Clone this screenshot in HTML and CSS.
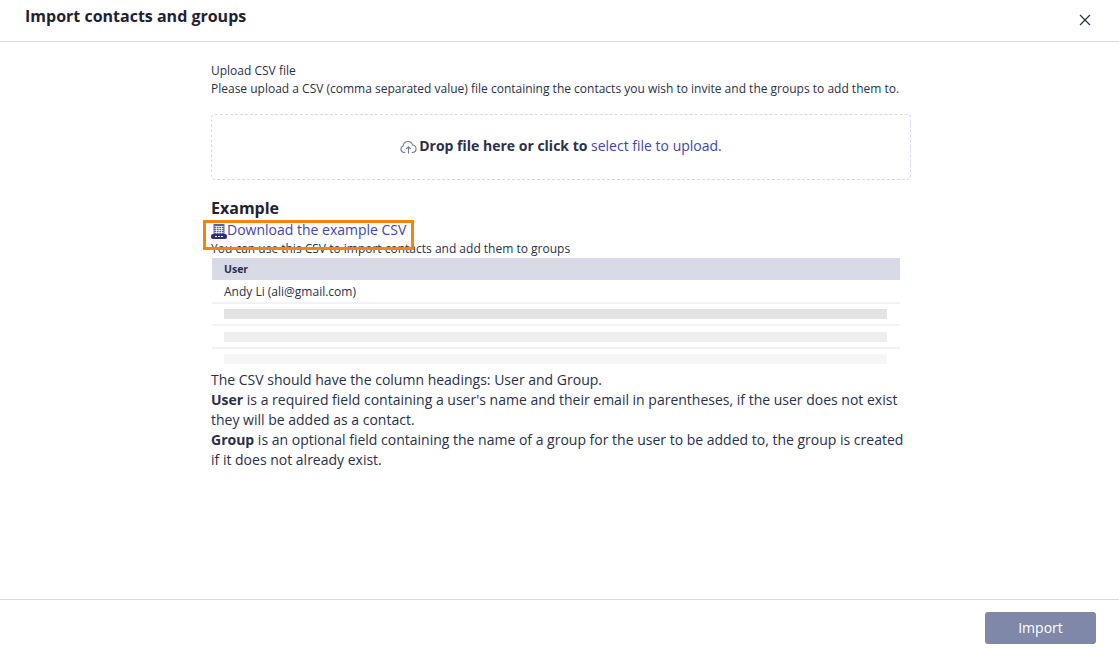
FILE: index.html
```html
<!DOCTYPE html>
<html lang="en">
<head>
<meta charset="utf-8">
<title>Import contacts and groups</title>
<link rel="stylesheet" href="styles.css">
</head>
<body>
<div class="dialog">
  <header class="head">
    <h1 class="title">Import contacts and groups</h1>
    <svg class="close" width="12" height="12" viewBox="0 0 12 12" aria-label="Close"><path d="M1 1L11 11M11 1L1 11" stroke="#2b2f3f" stroke-width="1.2" fill="none"/></svg>
  </header>
  <main class="body">
    <div class="col">
      <p class="intro">Upload CSV file<br>Please upload a CSV (comma separated value) file containing the contacts you wish to invite and the groups to add them to.</p>
      <div class="drop">
        <svg class="cloud" width="17" height="14" viewBox="0 0 17 14"><path d="M5.2 12.5H4.2A3.4 3.4 0 0 1 3.2 5.9 4.8 4.8 0 0 1 12.6 5 3.8 3.8 0 0 1 13 12.5H11.8" fill="none" stroke="#6f7899" stroke-width="1.1"/><path d="M8.5 13.5V6.8M6 9.2L8.5 6.8 11 9.2" fill="none" stroke="#6f7899" stroke-width="1.1"/></svg>
        <span class="drop-text"><b>Drop file here or click to</b> <a class="link">select file to upload.</a></span>
      </div>
      <h2 class="ex-title">Example</h2>
      <div class="dl">
        <svg class="csv" width="16" height="15" viewBox="0 0 16 15"><path d="M2.5 0H13.5V10H2.5Z" fill="#5b5fa6"/><path d="M3.5 2.5H12.5M3.5 4.5H12.5M3.5 6.5H12.5M3.5 8.5H12.5M5.5 2V9.5M8 2V9.5M10.5 2V9.5" stroke="#fff" stroke-width=".7"/><rect x="0" y="10" width="16" height="5" rx="2" fill="#2d2d7d"/><path d="M4 12.5H12" stroke="#fff" stroke-width="1" stroke-dasharray="2 1"/></svg>
        <a class="link">Download the example CSV</a>
        <span class="mark"></span>
      </div>
      <p class="note">You can use this CSV to import contacts and add them to groups</p>
      <div class="table">
        <div class="th">User</div>
        <div class="row r1">Andy Li (ali@gmail.com)</div>
        <div class="row r2"><span class="ph ph1"></span></div>
        <div class="row r3"><span class="ph ph2"></span></div>
        <div class="row r4"><span class="ph ph3"></span></div>
      </div>
      <p class="desc">The CSV should have the column headings: User and Group.<br>
      <b>User</b> is a required field containing a user's name and their email in parentheses, if the user does not exist they will be added as a contact.<br>
      <b>Group</b> is an optional field containing the name of a group for the user to be added to, the group is created if it does not already exist.</p>
    </div>
  </main>
  <footer class="foot"><button class="btn">Import</button></footer>
</div>
</body>
</html>
```
FILE: styles.css
```css
* { box-sizing: border-box; }
html, body { margin: 0; height: 100%; }
body { font-family: "Open Sans", sans-serif; color: #2a3048; background: #fff; overflow: hidden; }
.dialog { display: flex; flex-direction: column; height: 648px; }
.head { height: 42px; flex: none; display: flex; justify-content: space-between; align-items: flex-start; padding: 0 28px 0 25px; border-bottom: 1px solid #d9d9e2; }
.title { margin: 5px 0 0; font-size: 16px; line-height: 22px; font-weight: 700; color: #1f2233; }
.close { margin-top: 14px; }
.body { flex: 1; padding: 20px 0 0 211px; }
.col { width: 700px; }
.intro { margin: 0; font-size: 12px; line-height: 18px; }
.drop { margin-top: 16px; height: 66px; padding-bottom: 3px; border: 1px dashed #d6d8e6; border-radius: 4px; display: flex; align-items: center; justify-content: center; gap: 2px; font-size: 14px; }
.cloud { flex: none; margin-top: 3px; }
.link { color: #4146ae; }
.ex-title { margin: 17px 0 0; font-size: 16px; line-height: 22px; font-weight: 700; color: #1f2233; }
.dl { position: relative; display: flex; align-items: center; height: 20px; margin-top: 1px; font-size: 14px; line-height: 20px; }
.csv { flex: none; margin-top: 3px; }
.mark { position: absolute; left: -8px; top: 0; width: 211px; height: 30px; border: 3px solid #f7820c; }
.note { margin: 0; font-size: 12px; line-height: 18px; }
.table { margin: 0 0 0 1px; width: 688px; font-size: 12px; }
.th { height: 22px; line-height: 22px; background: #d8dae6; padding-left: 12px; font-size: 10.5px; font-weight: 700; }
.row { padding-left: 12px; border-bottom: 2px solid #f3f3f5; display: flex; align-items: center; }
.r1 { height: 24px; }
.r2 { height: 22px; }
.r3 { height: 23px; }
.r4 { height: 20px; border-bottom: 0; }
.ph { display: block; width: 663px; height: 10px; }
.ph1 { background: #e3e3e3; }
.ph2 { background: #eeeeee; }
.ph3 { background: #f6f6f6; }
.desc { margin: 1px 0 0; font-size: 14px; line-height: 20px; }
.foot { height: 49px; flex: none; border-top: 1px solid #d9d9e2; display: flex; justify-content: flex-end; padding: 12px 23px 0 0; }
.btn { width: 111px; height: 32px; padding: 0 0 2px; border: 0; border-radius: 3px; background: #7f88a8; color: #fff; font-family: inherit; font-size: 14px; }
```
